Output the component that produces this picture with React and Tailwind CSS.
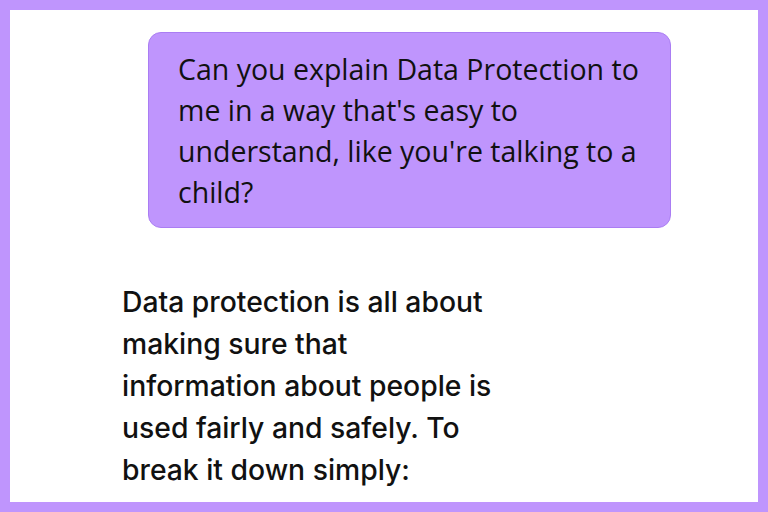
import React from 'react';

export default function App() {
  return (
    <div className="w-[768px] h-[512px] bg-[#bf95fd] p-[10px]">
      <div className="w-full h-full bg-white overflow-hidden">
        <div className="pt-[22px] pl-[138px]">
          <div
            className="w-[523px] rounded-[13px] bg-[#bf95fd] border border-[#aa7df3] pl-[29px] pr-[16px] pt-[16px] pb-[14px] text-[28.5px] leading-[41px] font-medium text-[#111]"
            style={{ fontFamily: '"Open Sans", "Liberation Sans", sans-serif' }}
          >
            Can you explain Data Protection to me in a way that's easy to understand, like you're talking to a child?
          </div>
        </div>
        <div
          className="ml-[112px] mt-[53px] w-[374px] text-[28.3px] leading-[42px] font-medium text-[#111]"
          style={{ fontFamily: 'Inter, "Liberation Sans", sans-serif' }}
        >
          Data protection is all about making sure that information about people is used fairly and safely. To break it down simply:
        </div>
      </div>
    </div>
  );
}
